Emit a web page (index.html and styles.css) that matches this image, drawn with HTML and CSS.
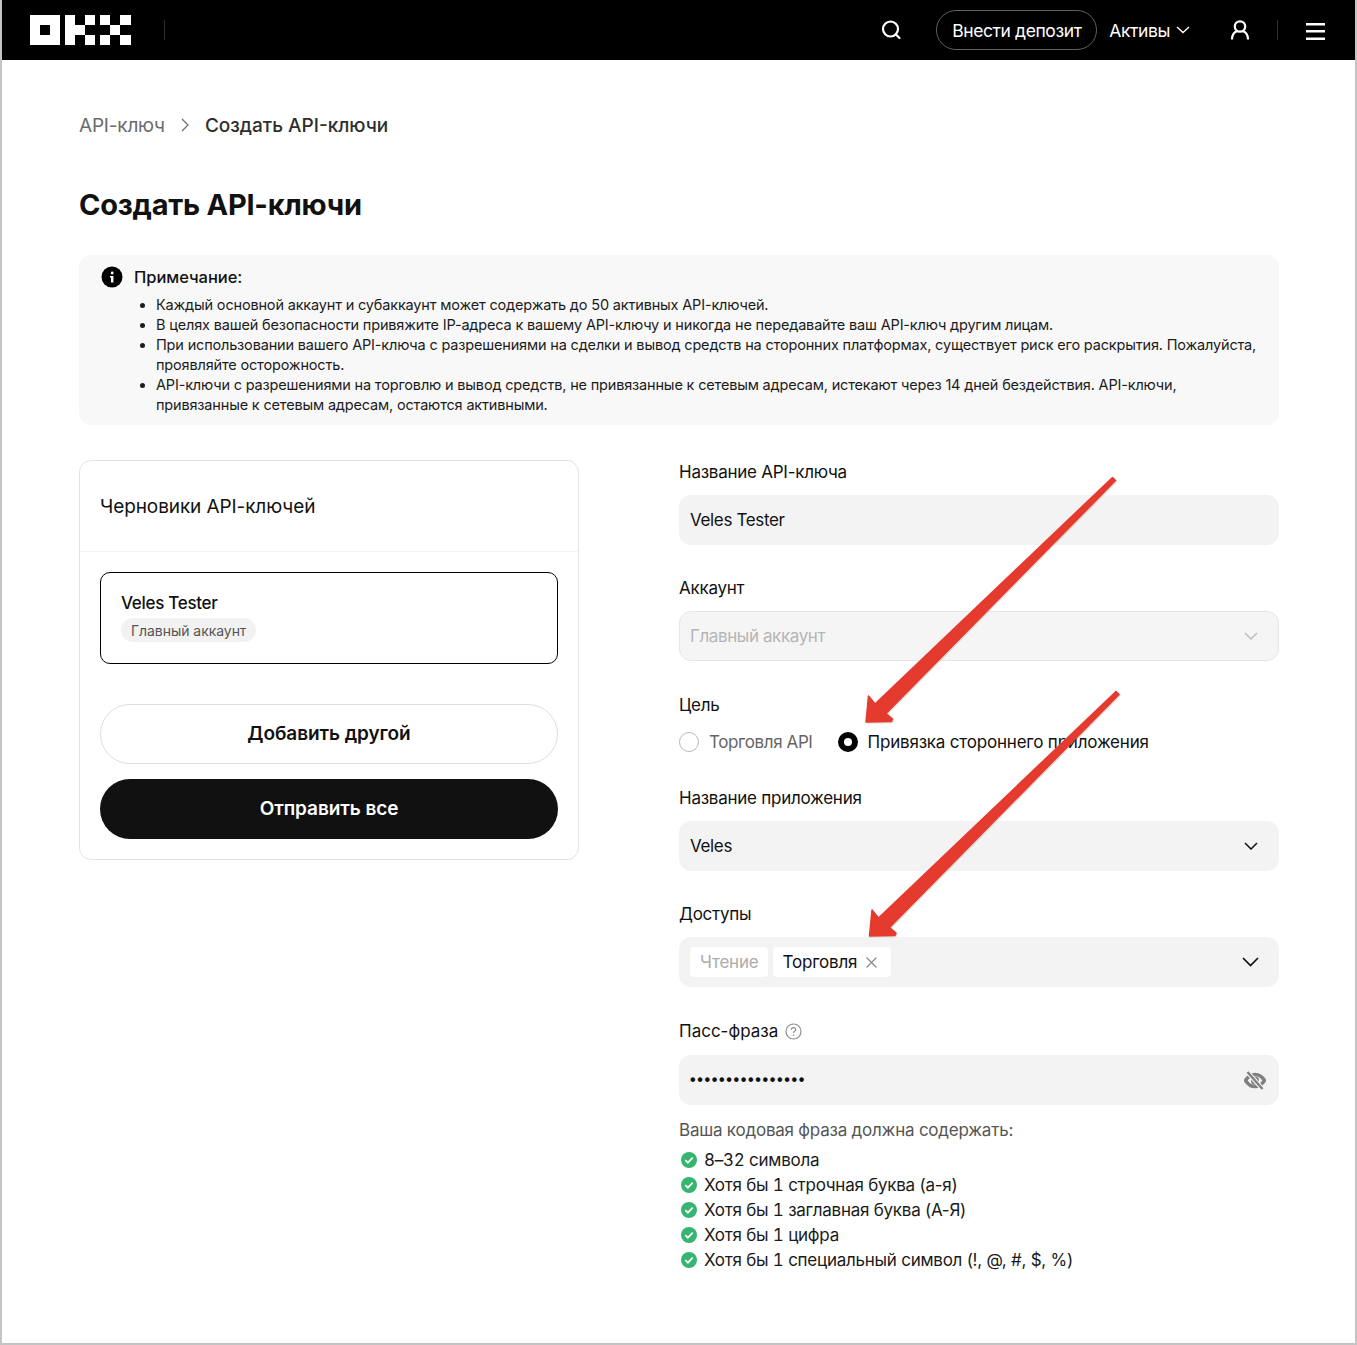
FILE: index.html
```html
<!DOCTYPE html>
<html lang="ru">
<head>
<meta charset="utf-8">
<title>Создать API-ключи</title>
<link rel="stylesheet" href="styles.css">
</head>
<body>
<div class="frame">
  <header class="topbar">
    <svg class="logo" width="101" height="30" viewBox="0 0 101 30" fill="#fff"><path fill-rule="evenodd" d="M0 0h30v30H0zM10 10v10h10V10z"/><rect x="35" width="10" height="30"/><rect x="45" y="10" width="10" height="10"/><rect x="55" width="10" height="10"/><rect x="55" y="20" width="10" height="10"/><rect x="70" width="10" height="10"/><rect x="70" y="20" width="10" height="10"/><rect x="80" y="10" width="10" height="10"/><rect x="90" width="11" height="10"/><rect x="90" y="20" width="11" height="10"/></svg>
    <span class="bar-div"></span>
    <span class="bar-space"></span>
    <svg class="ic-search" width="22" height="22" viewBox="0 0 22 22" fill="none" stroke="#fff" stroke-width="2.200"><circle cx="10.500" cy="10" r="7.500"/><path d="M16 15.500l3.500 3.500" stroke-linecap="round"/></svg>
    <a class="deposit">Внести депозит</a>
    <span class="assets">Активы</span>
    <svg class="ic-chev" width="14" height="8" viewBox="0 0 14 8" fill="none" stroke="#fff" stroke-width="1.400"><path d="M1 1l6 5.500L13 1"/></svg>
    <svg class="ic-user" width="20" height="20" viewBox="0 0 20 20" fill="none" stroke="#fff" stroke-width="2.300"><circle cx="10" cy="6.500" r="5.200"/><path d="M2 19.500c0-4.500 2-7.500 5.500-8.500M18 19.500c0-4.500-2-7.500-5.500-8.500"/></svg>
    <span class="bar-div second"></span>
    <svg class="ic-menu" width="19" height="17" viewBox="0 0 19 17" fill="#fff"><rect width="19" height="2.500"/><rect y="7" width="19" height="2.500"/><rect y="14.500" width="19" height="2.500"/></svg>
  </header>

  <main class="page">
    <nav class="crumbs">
      <span class="crumb-prev">API-ключ</span>
      <svg width="8" height="14" viewBox="0 0 8 14" fill="none" stroke="#6b6b6b" stroke-width="1.200"><path d="M1 1l6 6-6 6"/></svg>
      <span class="crumb-cur">Создать API-ключи</span>
    </nav>
    <h1 class="title">Создать API-ключи</h1>

    <section class="note">
      <div class="note-head">
        <svg width="22" height="22" viewBox="0 0 22 22"><circle cx="11" cy="11" r="10.500" fill="#000"/><rect x="10" y="10" width="2.400" height="6.500" fill="#fff"/><rect x="9" y="10" width="2" height="1.500" fill="#fff"/><circle cx="11.200" cy="7" r="1.400" fill="#fff"/></svg>
        <span>Примечание:</span>
      </div>
      <ul class="note-list">
        <li>Каждый основной аккаунт и субаккаунт может содержать до 50 активных API-ключей.</li>
        <li>В целях вашей безопасности привяжите IP-адреса к вашему API-ключу и никогда не передавайте ваш API-ключ другим лицам.</li>
        <li>При использовании вашего API-ключа с разрешениями на сделки и вывод средств на сторонних платформах, существует риск его раскрытия. Пожалуйста, проявляйте осторожность.</li>
        <li>API-ключи с разрешениями на торговлю и вывод средств, не привязанные к сетевым адресам, истекают через 14 дней бездействия. API-ключи, привязанные к сетевым адресам, остаются активными.</li>
      </ul>
    </section>

    <div class="columns">
      <aside class="drafts">
        <div class="drafts-head">Черновики API-ключей</div>
        <div class="drafts-body">
          <div class="draft">
            <div class="draft-name">Veles Tester</div>
            <span class="draft-tag">Главный аккаунт</span>
          </div>
          <button class="btn btn-light">Добавить другой</button>
          <button class="btn btn-dark">Отправить все</button>
        </div>
      </aside>

      <form class="form">
        <div class="field">
          <div class="label">Название API-ключа</div>
          <div class="control">Veles Tester</div>
        </div>
        <div class="field field-gap">
          <div class="label">Аккаунт</div>
          <div class="control disabled">Главный аккаунт
            <svg class="chev" width="14" height="8" viewBox="0 0 14 8" fill="none" stroke="#bdbdbd" stroke-width="1.500"><path d="M1 1l6 6 6-6"/></svg>
          </div>
        </div>
        <div class="field radio-field">
          <div class="label">Цель</div>
          <div class="radios">
            <span class="radio"></span><span class="radio-text muted">Торговля API</span>
            <span class="radio on"></span><span class="radio-text">Привязка стороннего приложения</span>
          </div>
        </div>
        <div class="field">
          <div class="label">Название приложения</div>
          <div class="control">Veles
            <svg class="chev" width="14" height="8" viewBox="0 0 14 8" fill="none" stroke="#111" stroke-width="1.500"><path d="M1 1l6 6 6-6"/></svg>
          </div>
        </div>
        <div class="field field-tall">
          <div class="label">Доступы</div>
          <div class="control tags">
            <span class="tag tag-off">Чтение</span>
            <span class="tag">Торговля
              <svg width="11" height="11" viewBox="0 0 11 11" fill="none" stroke="#8a8a8a" stroke-width="1.200"><path d="M.5.500l10 10M10.500.500l-10 10"/></svg>
            </span>
            <svg class="chev wide" width="17" height="10" viewBox="0 0 17 10" fill="none" stroke="#111" stroke-width="1.700"><path d="M1 1l7.500 7.500L16 1"/></svg>
          </div>
        </div>
        <div class="field pass">
          <div class="label">Пасс-фраза
            <svg width="17" height="17" viewBox="0 0 17 17" fill="none"><circle cx="8.500" cy="8.500" r="7.500" stroke="#8f8f8f" stroke-width="1.200"/><path d="M6.300 6.800c0-1.300 1-2.100 2.200-2.100s2.200.8 2.200 2c0 1.600-2.200 1.600-2.200 3.300" stroke="#8f8f8f" stroke-width="1.200"/><circle cx="8.500" cy="12.300" r=".8" fill="#8f8f8f"/></svg>
          </div>
          <div class="control">
            <span class="dots">••••••••••••••••</span>
            <svg class="eye" width="22" height="19" viewBox="0 0 22 19" fill="none"><path d="M1.500 9.500c2.500-4 5.700-6 9.500-6s7 2 9.500 6c-2.500 4-5.700 6-9.500 6s-7-2-9.500-6z" stroke="#808080" stroke-width="3.400"/><circle cx="11" cy="9.500" r="4" fill="#808080"/><path d="M3.500 1l15 17" stroke="#f3f3f3" stroke-width="4.600"/><path d="M3.500 1l15 17" stroke="#808080" stroke-width="2.400"/></svg>
          </div>
        </div>
        <div class="rules-title">Ваша кодовая фраза должна содержать:</div>
        <ul class="rules">
          <li><svg width="16" height="16" viewBox="0 0 16 16"><circle cx="8" cy="8" r="8" fill="#35b56f"/><path d="M4.300 8.200l2.600 2.500 4.800-5" fill="none" stroke="#fff" stroke-width="1.700"/></svg><span><span class="num">8</span>–<span class="num">32</span> символа</span></li>
          <li><svg width="16" height="16" viewBox="0 0 16 16"><circle cx="8" cy="8" r="8" fill="#35b56f"/><path d="M4.300 8.200l2.600 2.500 4.800-5" fill="none" stroke="#fff" stroke-width="1.700"/></svg><span>Хотя бы <span class="num">1</span> строчная буква (а-я)</span></li>
          <li><svg width="16" height="16" viewBox="0 0 16 16"><circle cx="8" cy="8" r="8" fill="#35b56f"/><path d="M4.300 8.200l2.600 2.500 4.800-5" fill="none" stroke="#fff" stroke-width="1.700"/></svg><span>Хотя бы <span class="num">1</span> заглавная буква (А-Я)</span></li>
          <li><svg width="16" height="16" viewBox="0 0 16 16"><circle cx="8" cy="8" r="8" fill="#35b56f"/><path d="M4.300 8.200l2.600 2.500 4.800-5" fill="none" stroke="#fff" stroke-width="1.700"/></svg><span>Хотя бы <span class="num">1</span> цифра</span></li>
          <li><svg width="16" height="16" viewBox="0 0 16 16"><circle cx="8" cy="8" r="8" fill="#35b56f"/><path d="M4.300 8.200l2.600 2.500 4.800-5" fill="none" stroke="#fff" stroke-width="1.700"/></svg><span>Хотя бы <span class="num">1</span> специальный символ (!, @, #, $, %)</span></li>
        </ul>
      </form>
    </div>
  </main>

  <svg class="arrows" width="1357" height="1345" viewBox="0 0 1357 1345">
    <path class="arrow-shadow" d="M867 723l2.500-26 6.500 8 237.500-226.500 3 3L887 714.500l6.500 5.500-1 2.500z"/>
    <path class="arrow" d="M866 722l2.500-26 6.500 8 237.500-226.500 3 3L886 713.500l6.500 5.500-1 2.500z"/>
    <path class="arrow-shadow" d="M870.500 937l2.500-26 6.500 8L1117 692.500l3 3L890.500 928.500l6.500 5.500-1 2.500z"/>
    <path class="arrow" d="M869.500 936l2.500-26 6.500 8L1116 691.500l3 3L889.500 927.500l6.500 5.500-1 2.500z"/>
  </svg>
</div>
</body>
</html>
```
FILE: styles.css
```css
* { box-sizing: border-box; }
html, body { margin: 0; padding: 0; background: #fff; }
body { font-family: Inter, "Liberation Sans", sans-serif; color: #111; }
.frame {
  position: relative;
  width: 1357px;
  height: 1345px;
  border-left: 2px solid #c4c4c4;
  border-right: 2px solid #c4c4c4;
  border-bottom: 2px solid #c4c4c4;
  overflow: hidden;
}
.topbar {
  height: 60px;
  background: #000;
  color: #fff;
  display: flex;
  align-items: center;
  padding-left: 28px;
  font-size: 17.500px;
  letter-spacing: -0.4px;
}
.bar-div { width: 1px; height: 20px; background: #2e2e2e; margin-left: 33px; }
.bar-space { flex: 1; }
.ic-search { margin-right: 34px; }
.deposit {
  height: 40px;
  width: 161px;
  border: 1px solid #5f5f5f;
  border-radius: 20px;
  display: flex;
  align-items: center;
  justify-content: center;
}
.assets { margin-left: 12px; }
.ic-chev { margin-left: 6px; }
.ic-user { margin-left: 40px; }
.bar-div.second { margin-left: 27px; }
.ic-menu { margin-left: 28px; margin-right: 30px; margin-top: 3px; }

.page { padding: 0 76px 0 77px; }
.crumbs { display: flex; align-items: center; height: 30px; margin-top: 50px; font-size: 19px; }
.crumb-prev { color: #6b6b6b; letter-spacing: -0.2px; }
.crumbs svg { margin: 0 16px; }
.crumb-cur { color: #2e2e2e; font-weight: 500; }
.title { margin: 45px 0 0; height: 40px; line-height: 40px; font-size: 29px; font-weight: 700; letter-spacing: -0.25px; color: #111; }

.note {
  margin-top: 30px;
  height: 170px;
  background: #f8f8f8;
  border-radius: 12px;
  padding: 11px 22px 0;
}
.note-head { display: flex; align-items: center; gap: 11px; height: 22px; font-size: 16.500px; font-weight: 500; letter-spacing: -0.05px; }
.note-list { margin: 7px 0 0; padding: 0 0 0 55px; font-size: 14.500px; line-height: 20px; letter-spacing: -0.17px; color: #1c1c1c; }

.columns { display: flex; gap: 100px; margin-top: 35px; align-items: flex-start; }
.drafts { width: 500px; height: 400px; border: 1px solid #e2e2e2; border-radius: 12px; }
.drafts-head { height: 91px; padding-left: 20px; display: flex; align-items: center; font-size: 19px; letter-spacing: -0.1px; border-bottom: 1px solid #f3f3f3; }
.drafts-body { padding: 20px; display: flex; flex-direction: column; }
.draft { height: 92px; border: 1px solid #000; border-radius: 10px; padding: 19px 20px 0; }
.draft-name { font-size: 17px; line-height: 22px; font-weight: 500; letter-spacing: -0.3px; }
.draft-tag { display: inline-flex; align-items: center; height: 24px; margin-top: 4px; padding: 0 10px; background: #f2f2f2; border-radius: 12px; font-size: 14px; letter-spacing: -0.05px; color: #555; }
.btn { height: 60px; padding-bottom: 2px; border-radius: 30px; font-family: inherit; font-size: 19px; font-weight: 600; letter-spacing: -0.08px; }
.btn-light { margin-top: 40px; background: #fff; border: 1px solid #dedede; color: #111; }
.btn-dark { margin-top: 15px; background: #111; border: 0; color: #fff; }

.form { width: 600px; }
.field { margin-bottom: 31px; }
.field-gap { margin-bottom: 32px; }
.label { height: 24px; line-height: 24px; margin-bottom: 11px; font-size: 17px; letter-spacing: -0.25px; display: flex; align-items: center; gap: 7px; }
.control {
  height: 50px;
  background: #f3f3f3;
  border-radius: 12px;
  padding: 0 11px;
  display: flex;
  align-items: center;
  font-size: 17px;
  letter-spacing: -0.35px;
  position: relative;
}
.control.disabled { background: #f5f5f5; border: 1px solid #e6e6e6; padding: 0 10px; color: #b5b5b5; letter-spacing: -0.4px; }
.chev { margin-left: auto; margin-right: 10px; }
.chev.wide { margin-right: 9px; }
.radio-field { margin-bottom: 32px; }
.radio-field .label { margin-bottom: 13px; }
.radios { display: flex; align-items: center; height: 24px; font-size: 17px; letter-spacing: -0.2px; }
.radio { width: 20px; height: 20px; border-radius: 50%; border: 1px solid #b9b9b9; background: #fff; }
.radio.on { border: 6px solid #000; margin-left: 25px; }
.radio-text { margin-left: 10px; }
.radio-text.muted { color: #666; letter-spacing: -0.4px; }
.field-tall { margin-bottom: 32px; }
.tags { gap: 5px; letter-spacing: -0.2px; }
.tag { display: inline-flex; align-items: center; gap: 9px; height: 30px; padding: 0 14px 0 10px; background: #fff; border-radius: 4px; }
.tag-off { color: #ababab; padding-right: 9px; }
.pass { margin-bottom: 12px; }
.pass .label { margin-bottom: 12px; letter-spacing: 0; gap: 7px; }
.dots { font-family: "Liberation Sans", sans-serif; font-size: 16px; letter-spacing: 1.650px; font-weight: 700; color: #111; }
.eye { margin-left: auto; margin-right: 2px; }
.rules-title { height: 26px; line-height: 26px; font-size: 17px; letter-spacing: -0.22px; color: #555; }
.rules { list-style: none; margin: 4px 0 0; padding: 0; font-size: 17px; letter-spacing: -0.25px; }
.rules li { height: 25px; display: flex; align-items: center; gap: 7px; padding-left: 2px; color: #1a1a1a; }
.num { font-variant-numeric: tabular-nums; }
.arrows { position: absolute; left: -2px; top: 0; pointer-events: none; }
.arrow { fill: #e53a2e; stroke: #e53a2e; stroke-width: 1.500; stroke-linejoin: round; }
.arrow-shadow { fill: #7a5a3a; opacity: .18; stroke: #7a5a3a; stroke-width: 1.500; stroke-linejoin: round; }
```
